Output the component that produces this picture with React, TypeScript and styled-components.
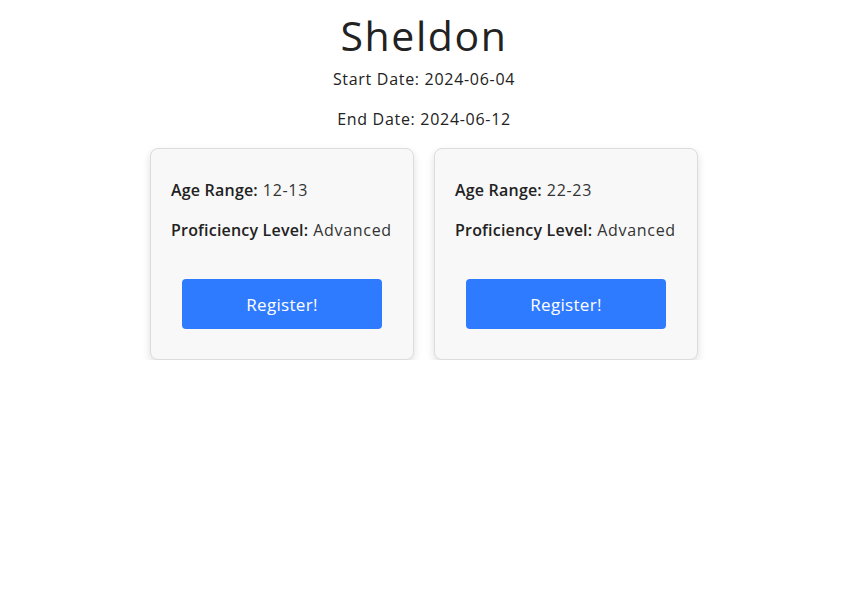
import styled, { createGlobalStyle } from "styled-components";

const GlobalStyle = createGlobalStyle`
  body {
    margin: 0;
    background: #fff;
    font-family: "Open Sans", "Liberation Sans", sans-serif;
    color: #212529;
  }
`;

const Page = styled.div`
  width: 848px;
  display: flex;
  flex-direction: column;
  align-items: center;
`;

const Title = styled.h1`
  margin: 11px 0 0;
  font-size: 41px;
  font-weight: 400;
  line-height: 48px;
  letter-spacing: 1.6px;
  color: #222;
`;

const DateLine = styled.p`
  margin: 8px 0 0;
  font-size: 16px;
  line-height: 24px;
  letter-spacing: 0.7px;
  color: #222;

  & + & {
    margin-top: 16px;
  }
`;

const Cards = styled.div`
  display: flex;
  gap: 20px;
  margin-top: 17px;
`;

const Card = styled.div`
  width: 222px;
  padding: 29px 20px 30px;
  background: #f8f8f8;
  border: 1px solid #dcdcdc;
  border-radius: 8px;
  box-shadow: 0 4px 8px rgba(0, 0, 0, 0.13);
  display: flex;
  flex-direction: column;
`;

const Row = styled.div`
  font-size: 16px;
  line-height: 24px;
  letter-spacing: 0.7px;
  color: #333;
  white-space: nowrap;

  & + & {
    margin-top: 16px;
  }
`;

const Label = styled.span`
  font-weight: 600;
  letter-spacing: 0.2px;
  color: #222;
`;

const RegisterButton = styled.button`
  align-self: center;
  margin-top: 37px;
  width: 200px;
  height: 50px;
  border: none;
  border-radius: 4px;
  background: #2f7bff;
  color: #fff;
  font-family: inherit;
  font-size: 17px;
  letter-spacing: 0.3px;
  cursor: pointer;
`;

type Session = { age: string; level: string };

const sessions: Session[] = [
  { age: "12-13", level: "Advanced" },
  { age: "22-23", level: "Advanced" },
];

export default function App() {
  return (
    <>
      <GlobalStyle />
      <Page>
        <Title>Sheldon</Title>
        <DateLine>Start Date: 2024-06-04</DateLine>
        <DateLine>End Date: 2024-06-12</DateLine>
        <Cards>
          {sessions.map((s, i) => (
            <Card key={i}>
              <Row>
                <Label>Age Range:</Label> {s.age}
              </Row>
              <Row>
                <Label>Proficiency Level:</Label> {s.level}
              </Row>
              <RegisterButton>Register!</RegisterButton>
            </Card>
          ))}
        </Cards>
      </Page>
    </>
  );
}
